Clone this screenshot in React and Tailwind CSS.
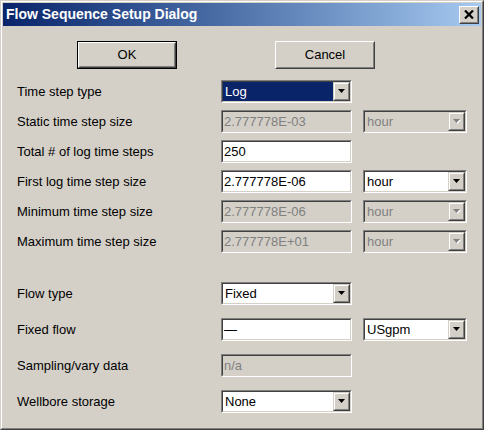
import React from "react";

const font = { fontFamily: '"Liberation Sans", Arial, sans-serif' };

function Sunken({ className = "", children, bg = "bg-white" }) {
    return (
        <div className={`border border-t-[#808080] border-l-[#808080] border-r-white border-b-white ${className}`}>
            <div className={`h-full w-full border border-t-[#404040] border-l-[#404040] border-r-[#d4d0c8] border-b-[#d4d0c8] ${bg} flex items-center`}>
                {children}
            </div>
        </div>
    );
}

function Arrow({ disabled }) {
    return (
        <div className="ml-auto h-full w-[17px] border border-t-[#d4d0c8] border-l-[#d4d0c8] border-r-[#404040] border-b-[#404040]">
            <div className="h-full w-full border border-t-white border-l-white border-r-[#808080] border-b-[#808080] bg-[#d4d0c8] flex items-center justify-center">
                <svg width="8" height="5" viewBox="0 0 8 5">
                    {disabled && <polygon points="1,1 8,1 4.5,5" fill="#ffffff" />}
                    <polygon points="0,0 7,0 3.5,4" fill={disabled ? "#808080" : "#000000"} />
                </svg>
            </div>
        </div>
    );
}

function TextBox({ value, disabled, w = "w-[131px]" }) {
    return (
        <Sunken className={`${w} h-[23px]`} bg={disabled ? "bg-[#d4d0c8]" : "bg-white"}>
            <span className={`pl-[1px] text-[13px] leading-none ${disabled ? "text-[#808080]" : "text-black"}`}>{value}</span>
        </Sunken>
    );
}

function Combo({ value, disabled, selected, w = "w-[131px]" }) {
    return (
        <Sunken className={`${w} h-[23px]`} bg={disabled ? "bg-[#d4d0c8]" : "bg-white"}>
            <div className={`h-full flex-1 flex items-center ${selected ? "bg-[#0a246a] text-white" : disabled ? "text-[#808080]" : "text-black"}`}>
                <span className="pl-[2px] text-[13px] leading-none">{value}</span>
            </div>
            <Arrow disabled={disabled} />
        </Sunken>
    );
}

function Row({ label, children }) {
    return (
        <div className="flex items-center h-[23px]">
            <div className="w-[204px] text-[13px] text-black">{label}</div>
            <div className="flex items-center gap-[11px]">{children}</div>
        </div>
    );
}

export default function App() {
    return (
        <div style={font} className="w-[484px] h-[430px] border border-t-[#d4d0c8] border-l-[#d4d0c8] border-r-[#404040] border-b-[#404040] select-none">
            <div className="h-full w-full border border-t-white border-l-white border-r-[#808080] border-b-[#808080] bg-[#d4d0c8] p-[1px] flex flex-col">
                {/* title bar */}
                <div className="h-[23px] flex items-center bg-gradient-to-r from-[#0a246a] to-[#a6caf0] pl-[3px] pr-[2px]">
                    <span className="text-white font-bold text-[14px]">Flow Sequence Setup Dialog</span>
                    <div className="ml-auto w-[20px] h-[18px] border border-t-white border-l-white border-r-[#404040] border-b-[#404040]">
                        <div className="h-full w-full border border-t-[#d4d0c8] border-l-[#d4d0c8] border-r-[#808080] border-b-[#808080] bg-[#d4d0c8] flex items-center justify-center">
                            <svg width="10" height="9" viewBox="0 0 10 9">
                                <path d="M1 0.5 L9 8.5 M9 0.5 L1 8.5" stroke="#000" strokeWidth="2.2" />
                            </svg>
                        </div>
                    </div>
                </div>

                <div className="pl-[14px] pt-[15px]">
                    {/* buttons */}
                    <div className="flex h-[28px]">
                        <div className="ml-[60px] w-[100px] h-full border border-black">
                            <div className="h-full w-full border border-t-white border-l-white border-r-[#404040] border-b-[#404040]">
                                <div className="h-full w-full border border-t-[#d4d0c8] border-l-[#d4d0c8] border-r-[#808080] border-b-[#808080] flex items-center justify-center text-[13px] text-black">
                                    OK
                                </div>
                            </div>
                        </div>
                        <div className="ml-[98px] w-[100px] h-full border border-t-white border-l-white border-r-[#404040] border-b-[#404040]">
                            <div className="h-full w-full border border-t-[#d4d0c8] border-l-[#d4d0c8] border-r-[#808080] border-b-[#808080] flex items-center justify-center text-[13px] text-black">
                                Cancel
                            </div>
                        </div>
                    </div>

                    <div className="mt-[11px] flex flex-col gap-[7px]">
                        <Row label="Time step type">
                            <Combo value="Log" selected />
                        </Row>
                        <Row label="Static time step size">
                            <TextBox value="2.777778E-03" disabled />
                            <Combo value="hour" disabled w="w-[104px]" />
                        </Row>
                        <Row label="Total # of log time steps">
                            <TextBox value="250" />
                        </Row>
                        <Row label="First log time step size">
                            <TextBox value="2.777778E-06" />
                            <Combo value="hour" w="w-[104px]" />
                        </Row>
                        <Row label="Minimum time step size">
                            <TextBox value="2.777778E-06" disabled />
                            <Combo value="hour" disabled w="w-[104px]" />
                        </Row>
                        <Row label="Maximum time step size">
                            <TextBox value="2.777778E+01" disabled />
                            <Combo value="hour" disabled w="w-[104px]" />
                        </Row>
                    </div>

                    <div className="mt-[29px] flex flex-col gap-[13px]">
                        <Row label="Flow type">
                            <Combo value="Fixed" />
                        </Row>
                        <Row label="Fixed flow">
                            <TextBox value="—" />
                            <Combo value="USgpm" w="w-[104px]" />
                        </Row>
                        <Row label="Sampling/vary data">
                            <TextBox value="n/a" disabled />
                        </Row>
                        <Row label="Wellbore storage">
                            <Combo value="None" />
                        </Row>
                    </div>
                </div>
            </div>
        </div>
    );
}
